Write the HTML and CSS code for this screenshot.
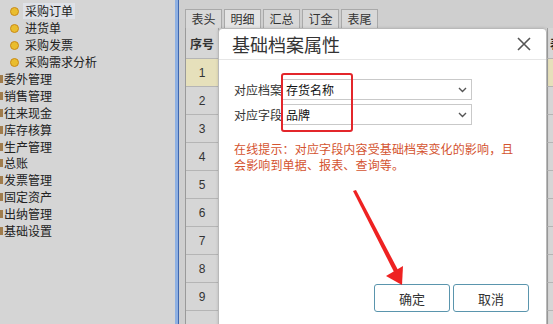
FILE: index.html
```html
<!DOCTYPE html>
<html lang="zh-CN">
<head>
<meta charset="utf-8">
<title>基础档案属性</title>
<link rel="stylesheet" href="styles.css">
</head>
<body>
<div class="app">
  <aside class="sidebar">
    <ul class="tree">
      <li class="child"><span class="dot"></span><span class="label selected">采购订单</span></li>
      <li class="child"><span class="dot"></span><span class="label">进货单</span></li>
      <li class="child"><span class="dot"></span><span class="label">采购发票</span></li>
      <li class="child"><span class="dot"></span><span class="label">采购需求分析</span></li>
      <li class="top"><span class="sq"></span><span class="label">委外管理</span></li>
      <li class="top"><span class="sq"></span><span class="label">销售管理</span></li>
      <li class="top"><span class="sq"></span><span class="label">往来现金</span></li>
      <li class="top"><span class="sq"></span><span class="label">库存核算</span></li>
      <li class="top"><span class="sq"></span><span class="label">生产管理</span></li>
      <li class="top"><span class="sq"></span><span class="label">总账</span></li>
      <li class="top"><span class="sq"></span><span class="label">发票管理</span></li>
      <li class="top"><span class="sq"></span><span class="label">固定资产</span></li>
      <li class="top"><span class="sq"></span><span class="label">出纳管理</span></li>
      <li class="top"><span class="sq"></span><span class="label">基础设置</span></li>
    </ul>
  </aside>
  <div class="divider"></div>
  <main class="main">
    <div class="tabs">
      <div class="tab">表头</div>
      <div class="tab active">明细</div>
      <div class="tab">汇总</div>
      <div class="tab">订金</div>
      <div class="tab">表尾</div>
    </div>
    <div class="grid">
      <div class="row head"><div class="c1">序号</div><div class="c2"></div><div class="c3">表</div></div>
      <div class="row sel"><div class="c1">1</div><div class="c2"></div><div class="c3"></div></div>
      <div class="row"><div class="c1">2</div><div class="c2"></div><div class="c3"></div></div>
      <div class="row"><div class="c1">3</div><div class="c2"></div><div class="c3"></div></div>
      <div class="row"><div class="c1">4</div><div class="c2"></div><div class="c3"></div></div>
      <div class="row"><div class="c1">5</div><div class="c2"></div><div class="c3"></div></div>
      <div class="row"><div class="c1">6</div><div class="c2"></div><div class="c3"></div></div>
      <div class="row"><div class="c1">7</div><div class="c2"></div><div class="c3"></div></div>
      <div class="row"><div class="c1">8</div><div class="c2"></div><div class="c3"></div></div>
      <div class="row"><div class="c1">9</div><div class="c2"></div><div class="c3"></div></div>
      <div class="row"><div class="c1"></div><div class="c2"></div><div class="c3"></div></div>
    </div>
  </main>
</div>

<div class="dialog">
  <div class="dlg-head">
    <span class="dlg-title">基础档案属性</span>
    <svg class="close" width="16" height="16" viewBox="0 0 16 16"><path d="M2 2 L14 14 M14 2 L2 14" stroke="#555" stroke-width="1.6" fill="none"/></svg>
  </div>
  <div class="dlg-body">
    <div class="field">
      <span class="flabel">对应档案</span>
      <div class="select"><span>存货名称</span><svg class="chev" width="9" height="6" viewBox="0 0 9 6"><path d="M1 1 L4.5 4.5 L8 1" stroke="#555" stroke-width="1.4" fill="none"/></svg></div>
    </div>
    <div class="field">
      <span class="flabel">对应字段</span>
      <div class="select"><span>品牌</span><svg class="chev" width="9" height="6" viewBox="0 0 9 6"><path d="M1 1 L4.5 4.5 L8 1" stroke="#555" stroke-width="1.4" fill="none"/></svg></div>
    </div>
    <p class="hint">在线提示：对应字段内容受基础档案变化的影响，且<br>会影响到单据、报表、查询等。</p>
    <div class="dlg-foot">
      <button class="btn">确定</button>
      <button class="btn">取消</button>
    </div>
  </div>
</div>

<div class="redbox"></div>
<svg class="arrow" width="553" height="324" viewBox="0 0 553 324">
  <polygon points="353,191 356,190 398,270 394,272" fill="#ee2222"/>
  <polygon points="386,276 403,266 402,285" fill="#ee2222"/>
</svg>
</body>
</html>
```
FILE: styles.css
```css
html, body {
  margin: 0;
  padding: 0;
}
body {
  width: 553px;
  height: 324px;
  overflow: hidden;
  position: relative;
  background: #d3d3d3;
  font-family: "Noto Sans CJK SC", "Noto Sans", sans-serif;
  font-size: 12px;
  color: #222;
}
.app {
  display: flex;
  height: 324px;
}
.sidebar {
  width: 175px;
  background: #d5d5d5;
  flex: none;
}
.tree {
  list-style: none;
  margin: 0;
  padding: 3px 0 0 0;
}
.tree li {
  height: 16.9px;
  display: flex;
  align-items: center;
  white-space: nowrap;
}
.child {
  padding-left: 10px;
}
.dot {
  width: 7px;
  height: 7px;
  border-radius: 50%;
  background: #e9bd2f;
  border: 1px solid #c98a18;
  margin-right: 4px;
  flex: none;
}
.child .label {
  padding: 0 2px;
  line-height: 16px;
}
.selected {
  background: #dfe2e8;
}
.sq {
  width: 3px;
  height: 8px;
  background: #a07c4c;
  margin-right: 1px;
  flex: none;
}
.label {
  line-height: 16px;
}
.divider {
  width: 3px;
  flex: none;
  background: #8eb0e2;
  border-right: 1px solid #3f66ad;
}
.main {
  flex: 1;
  background: #cfcfcf;
  padding: 9px 0 0 6px;
  overflow: hidden;
}
.tabs {
  display: flex;
  gap: 2px;
  height: 19px;
}
.tab {
  width: 35px;
  height: 18px;
  background: #d8d8d8;
  border: 1px solid #a9a9a9;
  border-bottom: none;
  text-align: center;
  line-height: 18px;
  font-size: 12px;
  color: #333;
}
.tab.active {
  background: #e4e4e4;
}
.grid {
  border-left: 1px solid #9a9a9a;
}
.row {
  display: flex;
  height: 28px;
  border-bottom: 1px solid #b5b5b5;
  box-sizing: border-box;
}
.row.head {
  height: 31px;
  font-weight: bold;
}
.c1 {
  width: 32px;
  flex: none;
  background: #d6d6d6;
  border-right: 1px solid #a8a8a8;
  display: flex;
  align-items: center;
  justify-content: center;
  color: #333;
  font-family: "Liberation Sans", "Noto Sans CJK SC", sans-serif;
  font-size: 12px;
}
.head .c1 {
  font-family: "Noto Sans CJK SC", sans-serif;
  font-weight: bold;
  font-size: 12px;
}
.c2 {
  width: 328px;
  flex: none;
  background: #d6d6d6;
}
.c3 {
  flex: 1;
  background: #d6d6d6;
  border-left: 1px solid #a0a0a0;
  padding-left: 2px;
  display: flex;
  align-items: center;
  font-size: 12px;
}
.row.sel .c1, .row.sel .c2, .row.sel .c3 {
  background: #e6e0bb;
}
.dialog {
  position: absolute;
  left: 218px;
  top: 28px;
  width: 327px;
  height: 310px;
  background: #fff;
  border: 1px solid #b9b9b9;
  border-radius: 4px 4px 0 0;
  box-shadow: 0 0 3px rgba(0,0,0,0.15);
}
.dlg-head {
  height: 30px;
  border-bottom: 1px solid #e6e6e6;
  display: flex;
  align-items: center;
  justify-content: space-between;
  padding: 0 14px 0 13px;
}
.dlg-title {
  font-size: 18px;
  color: #333;
  line-height: 24px;
}
.close {
  display: block;
}
.dlg-body {
  padding: 19px 17px 0 15px;
}
.field {
  display: flex;
  align-items: center;
  height: 21px;
  margin-bottom: 4px;
}
.flabel {
  width: 48px;
  font-size: 12px;
  color: #333;
  white-space: nowrap;
}
.select {
  width: 181px;
  height: 19px;
  border: 1px solid #c9c9c9;
  display: flex;
  align-items: center;
  justify-content: space-between;
  padding: 0 4px 0 3px;
  font-size: 12px;
  color: #111;
}
.chev {
  display: block;
}
.hint {
  margin: 16px 0 0 0;
  font-size: 12px;
  line-height: 16px;
  letter-spacing: 0.15px;
  color: #d4532f;
  white-space: nowrap;
}
.dlg-foot {
  display: flex;
  justify-content: flex-end;
  gap: 3px;
  margin-top: 111px;
}
.btn {
  width: 76px;
  height: 28px;
  background: #fff;
  border: 1px solid #5a95ad;
  border-radius: 3px;
  font-family: "Noto Sans CJK SC", sans-serif;
  font-size: 13px;
  color: #333;
  padding: 0;
}
.redbox {
  position: absolute;
  left: 281px;
  top: 73px;
  width: 68px;
  height: 55px;
  border: 2px solid #e3262b;
  border-radius: 3px;
}
.arrow {
  position: absolute;
  left: 0;
  top: 0;
}
```
